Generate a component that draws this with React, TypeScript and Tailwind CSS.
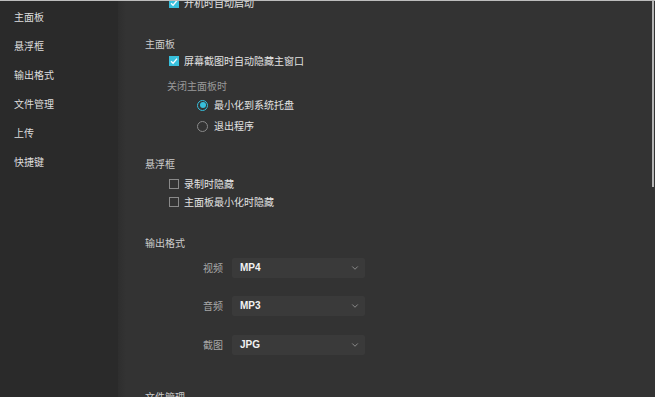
import { ChevronDown } from "lucide-react";

const font = { fontFamily: '"Noto Sans CJK SC", "Noto Sans", sans-serif' };

const navItems = ["主面板", "悬浮框", "输出格式", "文件管理", "上传", "快捷键"];

function Checkbox({ checked }: { checked?: boolean }) {
    if (checked) {
        return (
            <span className="w-[10px] h-[10px] bg-[#37bfdc] flex items-center justify-center shrink-0">
                <svg width="8" height="8" viewBox="0 0 8 8" fill="none">
                    <path d="M1 4.2 L3.1 6.2 L7 1.6" stroke="#f4fbff" strokeWidth="1.4" />
                </svg>
            </span>
        );
    }
    return <span className="w-[10px] h-[10px] border border-[#8a8a8a] shrink-0"></span>;
}

function Radio({ checked }: { checked?: boolean }) {
    if (checked) {
        return (
            <span className="w-[11px] h-[11px] rounded-full border border-[#37bfdc] flex items-center justify-center shrink-0">
                <span className="w-[6px] h-[6px] rounded-full bg-[#37bfdc]"></span>
            </span>
        );
    }
    return <span className="w-[11px] h-[11px] rounded-full border border-[#8a8a8a] shrink-0"></span>;
}

function SelectRow({ label, value, mt }: { label: string; value: string; mt: string }) {
    return (
        <div className={`flex items-center h-[20px] pl-[58px] ${mt}`}>
            <span className="w-[29px] text-[#a8a8a8]">{label}</span>
            <div className="w-[133px] h-[20px] bg-[#3a3a3a] rounded-[2px] flex items-center justify-between pl-[8px] pr-[5px]">
                <span className="text-[#f2f2f2] font-semibold" style={{ fontFamily: '"Liberation Sans", sans-serif' }}>{value}</span>
                <ChevronDown size={10} strokeWidth={2} className="text-[#9a9a9a]" />
            </div>
        </div>
    );
}

export default function App() {
    return (
        <div className="w-[655px] h-[397px] flex overflow-hidden border-t border-[#bdbdbd] text-[10px] leading-none" style={font}>
            {/* Sidebar */}
            <div className="w-[118px] bg-[#2a2a2a] pt-[1px] shrink-0">
                {navItems.map((item) => (
                    <div key={item} className="h-[29px] flex items-center pl-[14px] text-[#dedede]">
                        {item}
                    </div>
                ))}
            </div>
            <div className="w-[8px] bg-gradient-to-r from-[#2e2e2e] to-[#333333] shrink-0"></div>

            {/* Main */}
            <div className="flex-1 bg-[#333333] relative">
                <div className="pl-[19px]">
                    <div className="flex items-center gap-[5px] h-[16px] mt-[-6px] pl-[24px] text-[#e2e2e2]">
                        <Checkbox checked />
                        <span>开机时自动启动</span>
                    </div>

                    <div className="h-[16px] flex items-center mt-[25px] text-[#cdcdcd]">主面板</div>
                    <div className="flex items-center gap-[5px] h-[16px] mt-[1px] pl-[24px] text-[#e2e2e2]">
                        <Checkbox checked />
                        <span>屏幕截图时自动隐藏主窗口</span>
                    </div>
                    <div className="h-[16px] flex items-center mt-[9px] pl-[22px] text-[#9a9a9a]">关闭主面板时</div>
                    <div className="flex items-center gap-[6px] h-[16px] mt-[3px] pl-[52px] text-[#e2e2e2]">
                        <Radio checked />
                        <span>最小化到系统托盘</span>
                    </div>
                    <div className="flex items-center gap-[6px] h-[16px] mt-[5px] pl-[52px] text-[#e2e2e2]">
                        <Radio />
                        <span>退出程序</span>
                    </div>

                    <div className="h-[16px] flex items-center mt-[22px] text-[#cdcdcd]">悬浮框</div>
                    <div className="flex items-center gap-[5px] h-[16px] mt-[4px] pl-[24px] text-[#e2e2e2]">
                        <Checkbox />
                        <span>录制时隐藏</span>
                    </div>
                    <div className="flex items-center gap-[5px] h-[16px] mt-[2px] pl-[24px] text-[#e2e2e2]">
                        <Checkbox />
                        <span>主面板最小化时隐藏</span>
                    </div>

                    <div className="h-[16px] flex items-center mt-[25px] text-[#cdcdcd]">输出格式</div>
                    <SelectRow label="视频" value="MP4" mt="mt-[7px]" />
                    <SelectRow label="音频" value="MP3" mt="mt-[18px]" />
                    <SelectRow label="截图" value="JPG" mt="mt-[19px]" />

                    <div className="h-[16px] flex items-center mt-[34px] text-[#cdcdcd]">文件管理</div>
                </div>

                {/* scrollbar */}
                <div className="absolute right-[1px] top-0 w-[2px] h-[186px] bg-[#b5b5b5]"></div>
            </div>
        </div>
    );
}
